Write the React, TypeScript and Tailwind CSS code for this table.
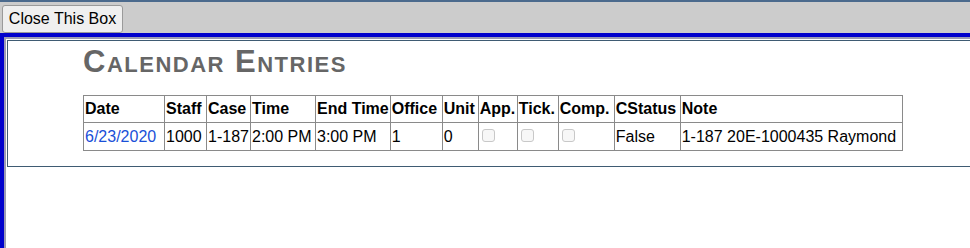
import React from 'react';

const cols = [
  { label: 'Date', w: 'w-[81px]' },
  { label: 'Staff', w: 'w-[42px]' },
  { label: 'Case', w: 'w-[44px]' },
  { label: 'Time', w: 'w-[65px]' },
  { label: 'End Time', w: 'w-[74px]' },
  { label: 'Office', w: 'w-[52px]' },
  { label: 'Unit', w: 'w-[36px]' },
  { label: 'App.', w: 'w-[39px]' },
  { label: 'Tick.', w: 'w-[41px]' },
  { label: 'Comp.', w: 'w-[56px]' },
  { label: 'CStatus', w: 'w-[66px]' },
  { label: 'Note', w: 'w-[222px]' },
];

const Check = () => (
  <span className="inline-block w-[13px] h-[13px] rounded-[3px] border border-[#c8c8c8] bg-[#f7f7f7] align-middle mt-[-3px]" />
);

const cell = 'border border-[#8a8a8a] px-[1px] whitespace-nowrap';

const App: React.FC = () => {
  return (
    <div className="w-[970px] h-[248px] overflow-hidden bg-white font-['Liberation_Sans',Arial,sans-serif] text-black">
      {/* top bar */}
      <div className="h-[2px] bg-[#4b6a8d]" />
      <div className="h-[31px] bg-[#cccccc] pl-[2px] pt-[3px]">
        <button className="h-[28px] w-[121px] bg-[#efefef] border border-[#9a9a9a] rounded-[3px] text-[16px] leading-none text-black">
          Close This Box
        </button>
      </div>

      {/* frame */}
      <div className="border-t-4 border-l-4 border-[#0000cc] h-[215px]">
        <div className="border-t-2 border-l-2 border-[#9b9bb4] h-full pt-[1px] pl-[1px]">
          <div className="w-[1000px] h-[127px] border border-[#3f5b73]">
            <h1 className="ml-[75px] mt-[3px] text-[31px] leading-[36px] tracking-[1.5px] font-bold text-[#666666] [font-variant:small-caps]">
              Calendar Entries
            </h1>
            <table className="ml-[75px] mt-[15px] border-collapse text-[16px] leading-[18px]">
              <thead>
                <tr className="h-[27px]">
                  {cols.map((c) => (
                    <th key={c.label} className={`${c.w} ${cell} text-left font-bold`}>
                      {c.label}
                    </th>
                  ))}
                </tr>
              </thead>
              <tbody>
                <tr className="h-[28px]">
                  <td className={`${cell} text-[#1a50d8]`}>6/23/2020</td>
                  <td className={cell}>1000</td>
                  <td className={cell}>1-187</td>
                  <td className={cell}>2:00 PM</td>
                  <td className={cell}>3:00 PM</td>
                  <td className={cell}>1</td>
                  <td className={cell}>0</td>
                  <td className="border border-[#8a8a8a] px-[3px]"><Check /></td>
                  <td className="border border-[#8a8a8a] px-[3px]"><Check /></td>
                  <td className="border border-[#8a8a8a] px-[3px]"><Check /></td>
                  <td className={cell}>False</td>
                  <td className={cell}>1-187 20E-1000435 Raymond</td>
                </tr>
              </tbody>
            </table>
          </div>
        </div>
      </div>
    </div>
  );
};

export default App;
